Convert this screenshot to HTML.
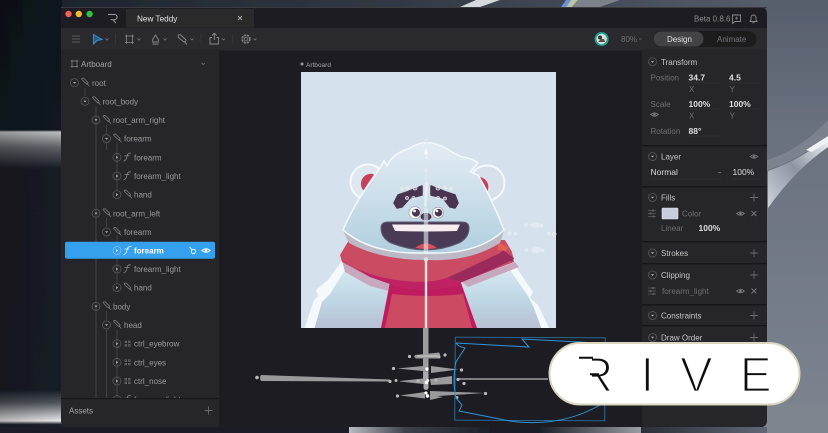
<!DOCTYPE html>
<html><head><meta charset="utf-8"><title>Rive</title>
<style>
html,body{margin:0;padding:0;background:#1a1d24;width:828px;height:433px;overflow:hidden}
svg{display:block}
text{font-family:"Liberation Sans",sans-serif}
.t{font-size:8px;fill:#9a999c}
.h{font-size:8px;fill:#c4c3c6}
.v{font-size:8.5px;fill:#dedde0;font-weight:bold}
.l{font-size:8px;fill:#6f6e72}
.c{fill:none;stroke:#59585c;stroke-width:.8}
.ln{stroke:#4a494d;stroke-width:.8}
.ic{fill:none;stroke:#79787c;stroke-width:.8}
.j{fill:#fff;fill-opacity:.35;stroke:#dfe3e8;stroke-width:.8}
.d{fill:#b9b9bb}
</style></head><body>
<svg width="828" height="433" viewBox="0 0 828 433" xmlns="http://www.w3.org/2000/svg">
<defs>
<linearGradient id="bgL" x1="0" y1="0" x2="0" y2="1">
<stop offset="0" stop-color="#10141c"/><stop offset=".3" stop-color="#121720"/><stop offset=".305" stop-color="#bdbfc2"/><stop offset=".34" stop-color="#5f6268"/><stop offset=".39" stop-color="#171b23"/><stop offset=".9" stop-color="#161c26"/><stop offset=".93" stop-color="#50555c"/><stop offset=".972" stop-color="#e8e8ea"/><stop offset=".98" stop-color="#1d2129"/><stop offset="1" stop-color="#1a1d24"/></linearGradient>
<linearGradient id="bgLx" x1="0" y1="0" x2="1" y2="0"><stop offset="0" stop-color="#000" stop-opacity=".2"/><stop offset="1" stop-color="#000" stop-opacity="0"/></linearGradient>
<linearGradient id="bgT" x1="0" y1="0" x2="1" y2="0"><stop offset="0" stop-color="#1a2029"/><stop offset=".5" stop-color="#333a46"/><stop offset="1" stop-color="#5a6270"/></linearGradient>
<linearGradient id="bgR" x1="0" y1="0" x2="0" y2="1"><stop offset="0" stop-color="#565e6c"/><stop offset=".3" stop-color="#6a717f"/><stop offset=".8" stop-color="#777e8c"/><stop offset="1" stop-color="#80868f"/></linearGradient>
<linearGradient id="sw1" x1="0" y1="1" x2="1" y2="0"><stop offset="0" stop-color="#cfd4dc"/><stop offset=".5" stop-color="#8d94a3"/><stop offset="1" stop-color="#f3f5f7"/></linearGradient>
<linearGradient id="hd" x1="0" y1="0" x2="0" y2="1"><stop offset="0" stop-color="#e3ecf5"/><stop offset=".55" stop-color="#c9dde9"/><stop offset="1" stop-color="#afcfdf"/></linearGradient>
<linearGradient id="bd" x1="0" y1="0" x2="0" y2="1"><stop offset="0" stop-color="#d8eaf4"/><stop offset=".55" stop-color="#bed6e3"/><stop offset="1" stop-color="#b8bfd4"/></linearGradient>
<linearGradient id="bot" x1="0" y1="0" x2="1" y2="0"><stop offset="0" stop-color="#b9bcc2"/><stop offset=".4" stop-color="#3e424b"/><stop offset="1" stop-color="#1c2028"/></linearGradient>
<linearGradient id="bot2" x1="0" y1="0" x2="1" y2="0"><stop offset="0" stop-color="#1c2028"/><stop offset="1" stop-color="#9a9da3"/></linearGradient>
<linearGradient id="bot3" x1="0" y1="0" x2="1" y2="0"><stop offset="0" stop-color="#2b2f38"/><stop offset=".6" stop-color="#5a6170"/><stop offset="1" stop-color="#7f858f"/></linearGradient>
<g id="bone"><path class="ic" d="M-3.4-3.8 a1.6 1.6 0 0 1 2.4-.4 L3-.2 a1.6 1.6 0 0 1-1.2 1.7 L-1.6-1.6 Z M1.8 .6 L4.4 3.6"/></g>
<g id="down"><circle class="c" r="4"/><path d="M-1.6-.7H1.6L0 1.1Z" fill="#b0afb3"/></g>
<g id="right"><circle class="c" r="4"/><path d="M-.8-1.6V1.6L1.2 0Z" fill="#b0afb3"/></g>
<g id="plus"><path d="M-4 0H4M0-4V4" stroke="#6a696d" stroke-width=".9"/></g>
<g id="eye"><path d="M-3.8 0Q0-3.4 3.8 0Q0 3.4-3.8 0Z" fill="none" stroke="#77767a" stroke-width=".9"/><circle r="1.3" fill="#77767a"/></g>
<g id="x"><path d="M-2.5-2.5L2.5 2.5M2.5-2.5L-2.5 2.5" stroke="#77767a" stroke-width=".9"/></g>
<g id="sl"><path d="M-4-3H4M-4 0H4M-4 3H4" stroke="#5f5e62" stroke-width=".8"/><circle cx="1" cy="-3" r="1.1" fill="#5f5e62"/><circle cx="-1.5" cy="0" r="1.1" fill="#5f5e62"/><circle cx="1.5" cy="3" r="1.1" fill="#5f5e62"/></g>
<g id="ctrl"><path d="M-2.5-2.5h1.6v1.6h-1.6zM1-2.5h1.6v1.6H1zM-2.5 1h1.6v1.6h-1.6zM1 1h1.6v1.6H1z" fill="none" stroke="#706f73" stroke-width=".7"/></g>
<g id="clip"><path d="M-4 4Q-1 3-.5-1T3.500-4M-3-1.500H2" fill="none" stroke="#85848a" stroke-width=".8"/></g>
<filter id="b" x="0" y="0" width="100%" height="100%"><feGaussianBlur stdDeviation=".3"/></filter>
<clipPath id="ab"><rect x="301" y="72" width="255" height="256"/></clipPath>
<clipPath id="tree"><rect x="61" y="51" width="158" height="347"/></clipPath>
</defs>

<g filter="url(#b)">
<!-- background -->
<rect width="828" height="433" fill="url(#bgT)"/>
<rect x="0" y="0" width="62" height="433" fill="url(#bgL)"/>
<rect x="0" y="0" width="62" height="433" fill="url(#bgLx)"/>
<rect x="760" y="0" width="68" height="433" fill="url(#bgR)"/>
<path d="M460 7L476 0H500L480 7Z" fill="#d5d8dd"/>
<path d="M561 7L566 0H571L566 7Z" fill="#6f8fd8"/><path d="M566 7L571 0H578L572 7Z" fill="#b7c5a8"/>
<path d="M572 7L578 0H620L600 7Z" fill="#7d818a"/>
<path d="M767 170Q800 160 828 135V120Q800 150 767 160Z" fill="#8d929d" opacity=".5"/>
<path d="M768 171Q805 158 828 136V147Q795 170 768 208Z" fill="url(#sw1)"/>
<path d="M806 150L828 136V142L812 152Z" fill="#f0f2f4"/>
<rect x="0" y="427" width="828" height="6" fill="#1b1e26"/>
<rect x="349" y="427" width="140" height="6" fill="url(#bot)"/>
<rect x="540" y="427" width="101" height="6" fill="url(#bot2)"/>
<rect x="641" y="427" width="187" height="6" fill="url(#bot3)"/>
<rect x="767" y="405" width="61" height="28" fill="#7f858f"/>

<!-- window -->
<rect x="61" y="7" width="706" height="420" rx="6" fill="#1f1e21"/>
<rect x="61" y="7" width="706" height="1" fill="#3b3a3e"/>
<rect x="126" y="9" width="128" height="18.5" fill="#2a292c"/>
<rect x="61" y="28" width="706" height="22.5" fill="#2b2a2d"/>
<path d="M61 51H219V427H67A6 6 0 0 1 61 421Z" fill="#28272a"/>
<rect x="220" y="51" width="421" height="376" fill="#1e1d20"/>
<path d="M642 51H767V421A6 6 0 0 1 761 427H642Z" fill="#28272a"/>
<rect x="61" y="398" width="158" height="1.2" fill="#19181b"/>
<circle cx="68.5" cy="14" r="3.2" fill="#ee5f57"/><circle cx="78.8" cy="14" r="3.2" fill="#f2b52f"/><circle cx="89.6" cy="14" r="3.2" fill="#2ac33f"/>
<path d="M108 14.5H114.5A2.6 2.6 0 0 1 114.5 19.7H110.6M113 19.7L116 23" fill="none" stroke="#9a999d" stroke-width="1"/>
<text x="137" y="21.5" font-size="8.2" fill="#e4e3e6">New Teddy</text>
<path d="M238 16l4 4M242 16l-4 4" stroke="#a9a8ac" stroke-width=".9"/>
<text x="694" y="21.5" font-size="8" fill="#8a898d">Beta 0.8.6</text>
<path d="M732.5 15h8v6.5h-5.5l-2.5 2Z" fill="none" stroke="#8a898d" stroke-width=".9"/><path d="M736.5 16.6v3M735 18.1h3" stroke="#8a898d" stroke-width=".7"/>
<path d="M750 21.5h7l-1-1.5v-2.5a2.5 2.5 0 0 0-5 0V20ZM752.5 22.8h2" fill="none" stroke="#8a898d" stroke-width=".9"/>

<!-- toolbar -->
<path d="M72 36H80M72 39H80M72 42H80" stroke="#58575b" stroke-width="1"/>
<path d="M93.500 34.500L102 39.500L97 40.500L93.500 44Z" fill="#1f5f8c" stroke="#3a8fcb" stroke-width="1"/>
<path d="M105.500 38.500l1.500 1.500l1.500-1.500" class="ic"/>
<path d="M126.500 36h6v6.500h-6ZM125 36h9M125 42.500h9M126.500 34.500v9.500M132.500 34.500v9.500" fill="none" stroke="#8a898d" stroke-width=".8"/>
<path d="M137.500 38.500l1.500 1.500l1.500-1.500" class="ic"/>
<path d="M155.500 35l2.800 4.500v2.500h-5.600v-2.500Z M152.500 44h6" fill="none" stroke="#8a898d" stroke-width=".9"/>
<path d="M163.500 38.500l1.500 1.500l1.500-1.500" class="ic"/>
<path d="M178 36a1.800 1.800 0 0 1 3-.8L186 40a1.800 1.800 0 0 1-2 2L178.500 37.500ZM184 41.500L187 44.500" fill="none" stroke="#8a898d" stroke-width=".9"/>
<path d="M190.500 38.500l1.500 1.500l1.500-1.500" class="ic"/>
<path d="M212 37.500h-2v6.500h8.500v-6.500h-2M214.300 40v-6.500M212 35.500l2.300-2.300l2.300 2.300" fill="none" stroke="#8a898d" stroke-width=".9"/>
<path d="M222 38.500l1.500 1.500l1.500-1.500" class="ic"/>
<circle cx="246" cy="39" r="3.800" fill="none" stroke="#7e7d81" stroke-width="1.800" stroke-dasharray="2.200 .9"/><circle cx="246" cy="39" r="1.700" fill="none" stroke="#7e7d81" stroke-width=".8"/>
<path d="M253.500 38.500l1.500 1.500l1.500-1.500" class="ic"/>
<path d="M115.500 34v10M201 34v10M232.700 34v10" stroke="#39383c" stroke-width=".8"/>
<circle cx="601.600" cy="39" r="7" fill="#1ba394"/><circle cx="601.600" cy="39" r="5.200" fill="#d9dfe0"/><circle cx="600" cy="37.500" r="2" fill="#39302f"/><path d="M598 42h7l-1-3h-3Z" fill="#5f4a3f"/>
<text x="621" y="42" font-size="8" fill="#6f6e72">80%</text>
<path d="M639 39h2.500" stroke="#6f6e72" stroke-width=".8"/>
<rect x="653" y="31" width="103.500" height="16" rx="8" fill="#1c1b1e"/>
<rect x="653.500" y="31.500" width="50" height="15" rx="7.500" fill="#434246"/>
<text x="667" y="42" font-size="8" fill="#e2e1e4">Design</text>
<text x="717" y="42" font-size="8" fill="#77767a">Animate</text>

<!-- tree -->
<g clip-path="url(#tree)">
<path class="ln" d="M85 88V96M96 107V410M106.500 125V134M106.500 143V150M106.500 218V227M117 143V190M117 236V283M106.500 311V321M106.500 330V410M117 330V410"/>
<path d="M72 61h5v5.500h-5ZM70.800 61h7.400M70.800 66.500h7.400M72 59.800v8M77 59.800v8" fill="none" stroke="#86858a" stroke-width=".7"/>
<text class="t" x="81" y="66.800" style="fill:#a3a2a6">Artboard</text>
<path d="M201.500 63l1.700 1.500l1.700-1.500" class="ic"/>
<use href="#down" x="74.500" y="82.700"/><use href="#bone" x="85" y="82.700"/><text class="t" x="92" y="85.800">root</text>
<use href="#down" x="85" y="101.300"/><use href="#bone" x="96" y="101.300"/><text class="t" x="102.500" y="104.300">root_body</text>
<use href="#down" x="96" y="120"/><use href="#bone" x="106.500" y="120"/><text class="t" x="113" y="123">root_arm_right</text>
<use href="#down" x="106.500" y="138.600"/><use href="#bone" x="117" y="138.600"/><text class="t" x="124" y="141.700">forearm</text>
<use href="#right" x="117" y="157.300"/><use href="#clip" x="127.500" y="157.300"/><text class="t" x="134" y="160.300">forearm</text>
<use href="#right" x="117" y="176"/><use href="#clip" x="127.500" y="176"/><text class="t" x="134" y="179">forearm_light</text>
<use href="#right" x="117" y="194.600"/><use href="#bone" x="127.500" y="194.600"/><text class="t" x="134" y="197.700">hand</text>
<use href="#down" x="96" y="213.300"/><use href="#bone" x="106.500" y="213.300"/><text class="t" x="113" y="216.300">root_arm_left</text>
<use href="#down" x="106.500" y="232"/><use href="#bone" x="117" y="232"/><text class="t" x="124" y="235">forearm</text>
<rect x="65" y="241.700" width="150" height="17" rx="2" fill="#35a0ee"/>
<circle cx="117" cy="250.500" r="4" fill="none" stroke="#7cc3f5" stroke-width=".8"/><path d="M116.200 249v3l2-1.500Z" fill="#d8eefc"/>
<path d="M123.500 254.500Q126.500 254 127 250T131.500 246.500M124.500 249H129" fill="none" stroke="#e6f4fe" stroke-width=".8"/>
<text x="134" y="253.500" font-size="8" font-weight="bold" fill="#fff">forearm</text>
<circle cx="193.500" cy="251.500" r="2.200" fill="none" stroke="#fff" stroke-width=".9"/><path d="M189.500 247l2.500 2.700" stroke="#fff" stroke-width=".9"/>
<path d="M202 250.500Q206 247 210 250.500Q206 254 202 250.500Z" fill="none" stroke="#fff" stroke-width=".9"/><circle cx="206" cy="250.500" r="1.300" fill="#fff"/>
<use href="#right" x="117" y="269"/><use href="#clip" x="127.500" y="269"/><text class="t" x="134" y="272">forearm_light</text>
<use href="#right" x="117" y="287.600"/><use href="#bone" x="127.500" y="287.600"/><text class="t" x="134" y="290.700">hand</text>
<use href="#down" x="96" y="306.300"/><use href="#bone" x="106.500" y="306.300"/><text class="t" x="113" y="309.300">body</text>
<use href="#down" x="106.500" y="325"/><use href="#bone" x="117" y="325"/><text class="t" x="124" y="328">head</text>
<use href="#right" x="117" y="343.600"/><use href="#ctrl" x="127.500" y="343.600"/><text class="t" x="134" y="346.700">ctrl_eyebrow</text>
<use href="#right" x="117" y="362.300"/><use href="#ctrl" x="127.500" y="362.300"/><text class="t" x="134" y="365.300">ctrl_eyes</text>
<use href="#right" x="117" y="381"/><use href="#ctrl" x="127.500" y="381"/><text class="t" x="134" y="384">ctrl_nose</text>
<use href="#right" x="117" y="399.600"/><use href="#clip" x="127.500" y="399.600"/><text class="t" x="134" y="402.700">forearm_light</text>
</g>
<text x="69" y="413.300" font-size="8" fill="#a3a2a6">Assets</text>
<use href="#plus" x="208.500" y="410.500"/>

<!-- right panel -->
<rect x="642" y="145" width="125" height="1.500" fill="#19181b"/>
<rect x="642" y="186" width="125" height="1.500" fill="#19181b"/>
<rect x="642" y="241" width="125" height="1.500" fill="#19181b"/>
<rect x="642" y="263" width="125" height="1.500" fill="#19181b"/>
<rect x="642" y="304" width="125" height="1.500" fill="#19181b"/>
<rect x="642" y="325" width="125" height="1.500" fill="#19181b"/>
<use href="#down" x="652.500" y="61.800"/><text class="h" x="661" y="64.800">Transform</text>
<text class="l" x="650.500" y="80.500">Position</text><text class="v" x="688.500" y="80.500">34.7</text><text class="v" x="729" y="80.500">4.5</text>
<path d="M688 83H720M729 83H760" stroke="#323135" stroke-width=".7"/>
<text class="l" x="689" y="92">X</text><text class="l" x="729.500" y="92">Y</text>
<text class="l" x="650.500" y="107">Scale</text><text class="v" x="688.500" y="107">100%</text><text class="v" x="729" y="107">100%</text>
<path d="M688 109H720M729 109H760" stroke="#323135" stroke-width=".7"/>
<use href="#eye" x="654.500" y="114.500"/>
<text class="l" x="689" y="118.500">X</text><text class="l" x="729.500" y="118.500">Y</text>
<text class="l" x="650.500" y="134">Rotation</text><text class="v" x="688.500" y="134">88°</text>
<path d="M688 136H720" stroke="#323135" stroke-width=".7"/>
<use href="#down" x="652.500" y="156.500"/><text class="h" x="661" y="159.500">Layer</text><use href="#eye" x="754" y="156.500"/>
<text class="h" x="650.500" y="175" style="fill:#d8d7da;font-size:8.500px">Normal</text><path d="M718 172.500h3" stroke="#77767a" stroke-width=".8"/><text class="v" x="732.500" y="175" style="font-weight:normal">100%</text>
<path d="M650 179H722M732 179H760" stroke="#323135" stroke-width=".7"/>
<use href="#down" x="652.500" y="197.500"/><text class="h" x="661" y="200.500">Fills</text><use href="#plus" x="754" y="197.500"/>
<use href="#sl" x="652" y="213.500"/><rect x="662" y="208" width="16" height="11" rx="1" fill="#c9cedf" stroke="#e5e4ea" stroke-width=".6"/>
<text class="l" x="682" y="216.500">Color</text><use href="#eye" x="740.500" y="213.500"/><use href="#x" x="754" y="213.500"/>
<text class="l" x="661" y="231">Linear</text><text class="v" x="698.500" y="231">100%</text>
<use href="#down" x="652.500" y="253"/><text class="h" x="661" y="256">Strokes</text><use href="#plus" x="754" y="253"/>
<use href="#down" x="652.500" y="275"/><text class="h" x="661" y="278">Clipping</text><use href="#plus" x="754" y="275"/>
<use href="#sl" x="652" y="291"/><text class="l" x="662" y="294">forearm_light</text><use href="#eye" x="740.500" y="291"/><use href="#x" x="754" y="291"/>
<use href="#down" x="652.500" y="315.500"/><text class="h" x="661" y="318.500">Constraints</text><use href="#plus" x="754" y="315.500"/>
<use href="#down" x="652.500" y="337.500"/><text class="h" x="661" y="340.500">Draw Order</text><use href="#plus" x="754" y="337.500"/>

<!-- artboard -->
<circle cx="302" cy="64" r="1.500" fill="#9a999d"/><text x="306" y="67" font-size="6.500" fill="#a5a4a8">Artboard</text>
<rect x="301" y="72" width="255" height="256" fill="#d5e2ee"/>
<g clip-path="url(#ab)">
<!-- body -->
<path d="M304 330L314 300L318 296L316 290L328 280L344 258L427 255L513 262L526 282L533 292L530 298L538 305L550 330Z" fill="#f5f9fc"/>
<path d="M314 330L322 302L330 294L346 268L427 265L510 270L528 296L534 308L542 330Z" fill="url(#bd)"/>
<!-- scarf shadow -->
<path d="M342 260L390 283L392 292L370 286L345 272Z" fill="#c8a8be"/>
<path d="M462 282L515 262L519 267L468 287Z" fill="#c8a8be"/>
<!-- chest -->
<path d="M390 282L381 328H477L460 280Q430 292 390 282Z" fill="#bf1f60"/>
<path d="M392 294Q430 298 463 294L472 328H385Z" fill="#cc4c64"/>
<!-- scarf -->
<path d="M349 240L340 255L342 262L370 277L390 284Q430 296 462 282L514 262L512 252L505 240Z" fill="#ca4c62"/>
<path d="M342 260Q362 274 390 279Q425 285 447 278L462 282Q430 296 390 284L370 277Z" fill="#bf2264"/>
<path d="M447 278L500 253L514 259Q490 271 462 282Z" fill="#9a2c5b"/>
<path d="M500 253L503 250L514 258L512 262Z" fill="#9a2c5b"/>
<path d="M497 242L508 247L506 251L498 250Z" fill="#e26052"/>
<!-- ears -->
<circle cx="368" cy="182" r="17.500" fill="#dfe8f1" stroke="#f6f9fc" stroke-width="2"/>
<path d="M373 174A10 10 0 0 0 364 191L378 180Z" fill="#c9405a"/>
<circle cx="487" cy="183" r="17.500" fill="#d8e0ec" stroke="#f6f9fc" stroke-width="2"/>
<path d="M477 177A10 10 0 0 1 487 192L478 186Z" fill="#c9405a"/>
<!-- head lip -->
<path d="M343 231Q375 255 427 253Q480 254 504 231L500 243Q470 262 427 260Q380 260 349 243Z" fill="#bdb9c6"/>
<!-- head -->
<path d="M343 230Q356 200 380 168L384 161L387 166Q392 154 408 149Q420 141 432 143Q444 146 452 152L462 157Q472 158 478 163L470 172L478 175Q490 195 504 230Q478 255 427 253Q372 255 343 230Z" fill="url(#hd)" stroke="#f4f8fb" stroke-width="1.500"/>
<!-- brows -->
<path d="M394 203L398 195L407 192L422 186V195L410 198L402 207L397 208Z" fill="#4a3550" stroke="#4a3550" stroke-width="1.500" stroke-linejoin="round"/>
<path d="M431 186L446 192L455 195L458 203L455 208L450 207L443 198L431 195Z" fill="#4a3550" stroke="#4a3550" stroke-width="1.500" stroke-linejoin="round"/>
<!-- eyes nose -->
<circle cx="415" cy="212.700" r="6" fill="#fff" stroke="#9a8fa5" stroke-width=".6"/><circle cx="416" cy="212.700" r="4" fill="#4a3550"/><circle cx="414.500" cy="211" r="1.400" fill="#fff"/>
<circle cx="438" cy="212.700" r="5.500" fill="#fff" stroke="#9a8fa5" stroke-width=".6"/><circle cx="438.500" cy="212.700" r="3.800" fill="#4a3550"/><circle cx="437" cy="211" r="1.300" fill="#fff"/>
<ellipse cx="426" cy="216.700" rx="5.500" ry="3.800" fill="#4a3550"/>
<!-- mouth -->
<path d="M381 228Q381 222 388 222H462Q469 222 469 228Q469 238 459 243Q426 257 391 243Q381 238 381 228Z" fill="#4a3a56" stroke="#645a72" stroke-width="1"/>
<path d="M392 224.500H460L457 231Q426 232 395 231Z" fill="#f7eef0"/>
<path d="M415 248Q426 239 437 248Q426 250 415 248Z" fill="#d84f5a"/>
</g>
<!-- bones on head -->
<path d="M426.500 207L428.500 184L426.500 183L424.500 184L424 207Z" fill="#fff" fill-opacity=".55" stroke="#d8e0e6" stroke-width=".8"/>
<path d="M426 147L423.500 153A2.500 2.500 0 0 0 428.500 153Z" fill="#fff" fill-opacity=".7" stroke="#dfe6ec" stroke-width=".6"/>
<path d="M426 172V183" stroke="#e9eef2" stroke-opacity=".6" stroke-width="1.500"/>
<path d="M426 212V252" stroke="#e9eef2" stroke-opacity=".6" stroke-width="4.500" stroke-linecap="round"/>
<path d="M426 259V330" stroke="#e4e4e6" stroke-width="2.400"/>
<g class="j">
<circle cx="426.500" cy="140.500" r="2" fill="#eef2f5"/><circle cx="426.500" cy="157.500" r="2"/><circle cx="426" cy="170" r="2"/><circle cx="426.500" cy="183.500" r="1.800"/><circle cx="426" cy="209.500" r="1.800"/><circle cx="426" cy="259.500" r="1.800"/>
<circle cx="402" cy="188.500" r="2"/><circle cx="407.500" cy="188" r="2"/><circle cx="415" cy="188" r="2"/><circle cx="438" cy="188" r="2"/><circle cx="445" cy="188" r="2"/><circle cx="451" cy="188.500" r="2"/>
<circle cx="407" cy="198" r="1.500"/><circle cx="413.500" cy="198" r="1.500"/><circle cx="438" cy="198" r="1.500"/><circle cx="445" cy="198.500" r="1.500"/>
<circle cx="509.500" cy="233.500" r="2"/><circle cx="515.500" cy="233.500" r="2"/>
<circle cx="526" cy="225" r="2"/><path d="M529 225L533 222.500H538L541 225L538 227.500H533Z"/><circle cx="541.500" cy="225.500" r="2"/>
<circle cx="548.500" cy="233.500" r="2"/><circle cx="554" cy="234" r="2"/>
<circle cx="526.500" cy="250" r="2"/><path d="M530 250L534 247H539L542 250L539 253H534Z"/><circle cx="542.500" cy="250.500" r="2"/>
</g>
<!-- bones below -->
<rect x="423" y="328" width="5.500" height="56" fill="#9c9c9e"/>
<rect x="423.500" y="372" width="5" height="18" rx="2.500" fill="#aaaaac"/>
<path d="M415 355L439 352.500Q442 356 438 358.500L416 358.500Q413 357 415 355Z" fill="#9a9a9c"/>
<path d="M417 356H438" stroke="#e3e3e5" stroke-width=".7"/>
<path d="M397 368.500L423 366V371ZM431 366L458 369.500L431 373Z" fill="#9a9a9c"/>
<path d="M261 375L390 379.500V381.500L261 381Q259 378 261 375Z" fill="#9a9a9c"/>
<path d="M400 381L423 378.500V384L400 381.500Z" fill="#9a9a9c"/>
<path d="M430 379L452 376V384L431 385Z" fill="#9a9a9c"/>
<path d="M458 379H548" stroke="#8c8c8e" stroke-width="1.800"/>
<path d="M400 395.500L425 392V398.500Z" fill="#9a9a9c"/>
<path d="M430 391L485 393L430 396.500Z" fill="#9a9a9c"/><path d="M430 395L443 397L430 400Z" fill="#9a9a9c"/>
<g class="d"><circle cx="257" cy="377.500" r="1.800"/><circle cx="409.500" cy="356.500" r="1.600"/><circle cx="445" cy="355" r="1.600"/><circle cx="439" cy="357" r="1.500"/><circle cx="393.500" cy="368.500" r="1.600"/><circle cx="461.500" cy="370" r="1.600"/><circle cx="390" cy="381.500" r="1.600"/><circle cx="396" cy="380.500" r="1.500"/><circle cx="418" cy="381" r="1.500"/><circle cx="436" cy="380" r="1.500"/><circle cx="458" cy="379.500" r="1.600"/><circle cx="464" cy="383.500" r="1.600"/><circle cx="397.500" cy="396" r="1.600"/><circle cx="485.500" cy="393.500" r="1.600"/><circle cx="457" cy="397.500" r="1.500"/></g>
<g fill="#fff"><circle cx="427" cy="369" r="1.700"/><circle cx="426.500" cy="382.500" r="1.700"/><circle cx="428" cy="380.500" r="1.300"/><circle cx="426" cy="393" r="1.600"/><circle cx="427.500" cy="396" r="1.700"/></g>
<!-- forearm outline -->
<rect x="455" y="337.500" width="150" height="83" transform="rotate(.3 530 379)" fill="none" stroke="#2a7db5" stroke-width=".8"/>
<path d="M456 343Q457 346 465 348L456 362Q452 380 456 398L462 405L459 411L510 421Q560 428 600 405L610 390M456 343L529 347L522 339L580 342Q600 343 610 350" fill="none" stroke="#2f93d6" stroke-width="1"/>

<!-- RIVE pill -->
<rect x="549.500" y="343" width="250" height="61.500" rx="30.700" fill="#fff" stroke="#d9d5bf" stroke-width="2"/>
<g font-size="49" fill="#0b0b0d" stroke="#fff" stroke-width="1.700">
<text x="578" y="391.500">R</text>
<text x="640.500" y="391.500">I</text>
<text x="680" y="391.500">V</text>
<text transform="translate(739.900 391.500) scale(.97 1)">E</text>
</g>
<rect x="578" y="354" width="14" height="39" fill="#fff"/>
<path d="M579 357.800H593M590 374.300H599" stroke="#0b0b0d" stroke-width="2"/>
</g>
</svg>
</body></html>
